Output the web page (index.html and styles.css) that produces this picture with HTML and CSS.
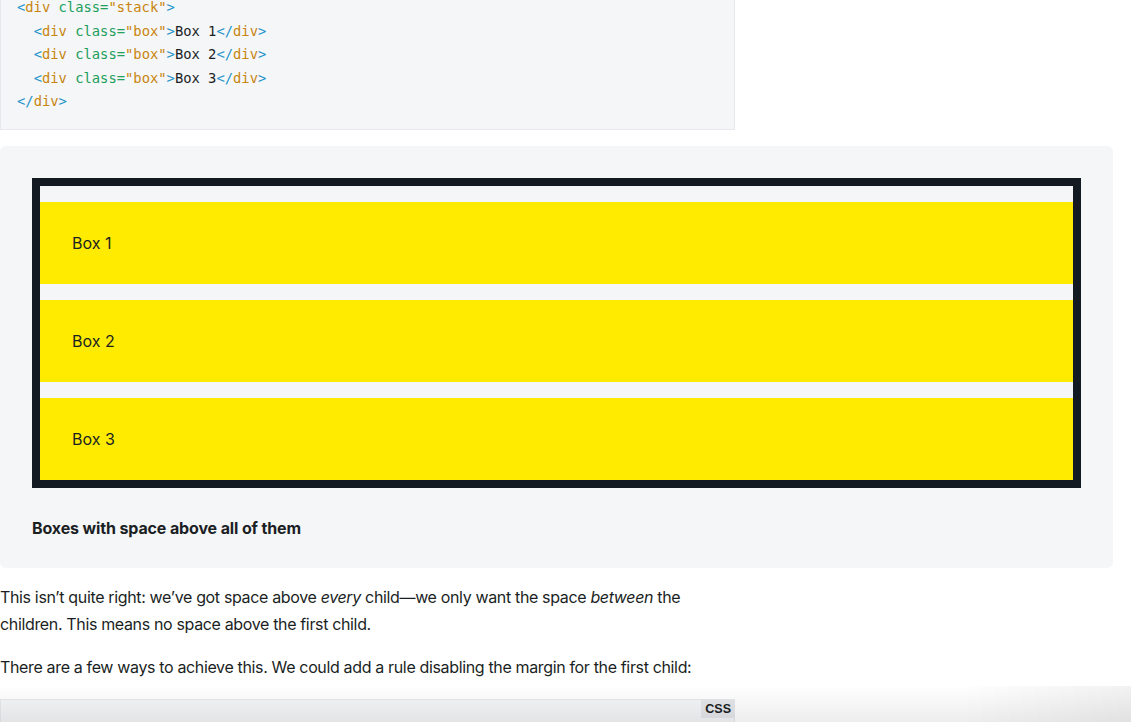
FILE: index.html
```html
<!DOCTYPE html>
<html lang="en">
<head>
<meta charset="utf-8">
<title>Stack</title>
<link rel="stylesheet" href="styles.css">
</head>
<body>
<main class="article">
  <pre class="code code-top"><code><span class="p">&lt;</span><span class="t">div</span> <span class="a">class=</span><span class="s">"stack"</span><span class="p">&gt;</span>
  <span class="p">&lt;</span><span class="t">div</span> <span class="a">class=</span><span class="s">"box"</span><span class="p">&gt;</span>Box 1<span class="p">&lt;/</span><span class="t">div</span><span class="p">&gt;</span>
  <span class="p">&lt;</span><span class="t">div</span> <span class="a">class=</span><span class="s">"box"</span><span class="p">&gt;</span>Box 2<span class="p">&lt;/</span><span class="t">div</span><span class="p">&gt;</span>
  <span class="p">&lt;</span><span class="t">div</span> <span class="a">class=</span><span class="s">"box"</span><span class="p">&gt;</span>Box 3<span class="p">&lt;/</span><span class="t">div</span><span class="p">&gt;</span>
<span class="p">&lt;/</span><span class="t">div</span><span class="p">&gt;</span></code></pre>

  <figure class="demo">
    <div class="stack">
      <div class="box">Box 1</div>
      <div class="box">Box 2</div>
      <div class="box">Box 3</div>
    </div>
    <figcaption class="caption">Boxes with space above all of them</figcaption>
  </figure>

  <p class="prose">This isn’t quite right: we’ve got space above <em>every</em> child—we only want the space <em>between</em> the children. This means no space above the first child.</p>
  <p class="prose">There are a few ways to achieve this. We could add a rule disabling the margin for the first child:</p>

  <div class="code-wrap">
    <span class="lang">CSS</span>
    <pre class="code code-bottom"><code><span class="s2">.stack</span> <span class="a">&gt;</span> <span class="s2">*</span> <span class="p">{</span></code></pre>
  </div>
</main>
<div class="fade"></div>
</body>
</html>
```

FILE: styles.css
```css
html, body {
  margin: 0;
  padding: 0;
  background: #ffffff;
}

body {
  font-family: Inter, "Noto Sans", "Liberation Sans", sans-serif;
  color: #1b1f24;
  font-size: 16px;
  overflow: hidden;
  height: 722px;
}

.article {
  width: 1113px;
}

.code {
  margin: 0;
  font-family: "DejaVu Sans Mono", "Liberation Mono", monospace;
  font-size: 13.8px;
  line-height: 23.6px;
  color: #1b1f24;
  background: #f5f6f8;
  border: 1px solid #e7e9ec;
  width: 735px;
  box-sizing: border-box;
}

.code-top {
  margin-top: -4px;
  padding: 0 16px 15px 16px;
  border-top: none;
}

.p { color: #1b93c9; }
.t { color: #c8850f; }
.a { color: #22a05b; }
.s { color: #c8850f; }
.s2 { color: #22a05b; }

.demo {
  margin: 16px 0 0 0;
  padding: 32px 32px 30px 32px;
  background: #f5f6f8;
  border-radius: 6px;
  width: 1113px;
  box-sizing: border-box;
}

.stack {
  border: 8px solid #141a21;
  display: flex;
  flex-direction: column;
}

.box {
  margin-top: 16px;
  background: #ffeb00;
  padding: 32px;
  height: 18px;
  line-height: 18px;
  font-size: 16px;
  color: #1b1f24;
}

.caption {
  margin-top: 30px;
  font-weight: 700;
  font-size: 16px;
  letter-spacing: -0.13px;
  line-height: 20px;
  color: #1b1f24;
}

.prose {
  width: 735px;
  margin: 16px 0 0 0;
  font-size: 16px;
  letter-spacing: -0.35px;
  line-height: 27px;
}

.prose + .prose {
  margin-top: 16px;
}

.code-wrap {
  position: relative;
  width: 735px;
  margin-top: 18px;
}

.lang {
  position: absolute;
  top: 1px;
  right: 0;
  background: #e5e7ea;
  font-family: "Liberation Sans", Arial, sans-serif;
  font-weight: 700;
  font-size: 12.5px;
  line-height: 18px;
  padding: 0 4px;
  color: #1b1f24;
}

.code-bottom {
  padding: 18px 16px 16px 32px;
}

.fade {
  position: fixed;
  left: 0;
  right: 0;
  bottom: 0;
  height: 36px;
  pointer-events: none;
  background:
    linear-gradient(to right, rgba(255,255,255,0) 85%, rgba(0,0,0,0.05) 100%),
    linear-gradient(to bottom, rgba(0,0,0,0) 0%, rgba(0,0,0,0.07) 100%);
}
```
